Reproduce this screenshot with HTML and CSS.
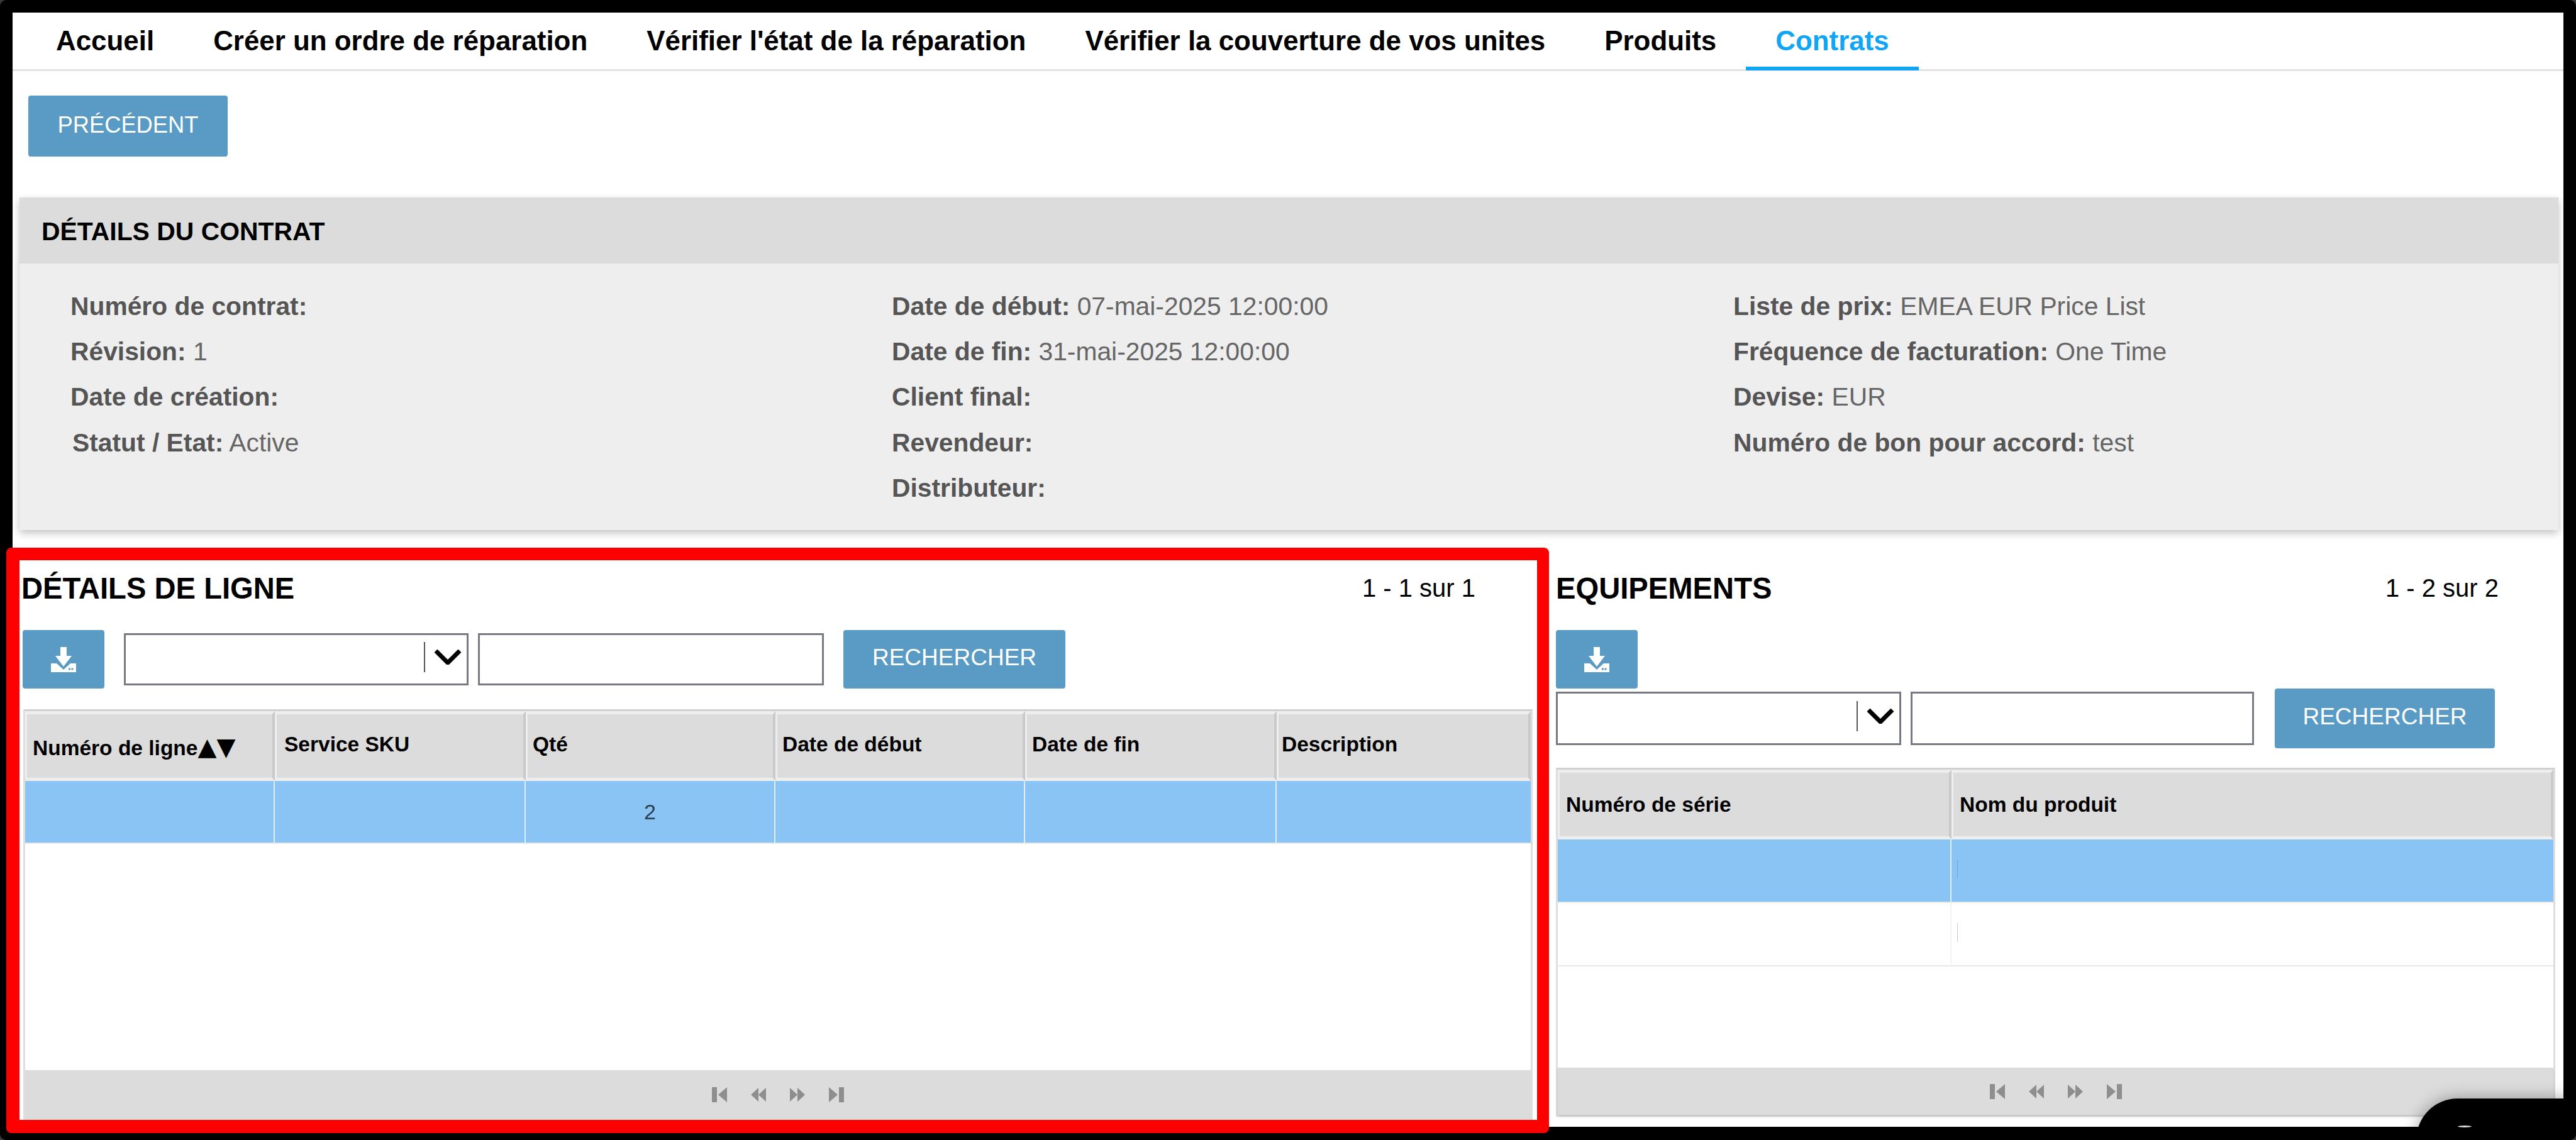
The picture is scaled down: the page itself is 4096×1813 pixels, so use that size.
FILE: index.html
```html
<!DOCTYPE html>
<html lang="fr">
<head>
<meta charset="utf-8">
<title>Contrats</title>
<link rel="stylesheet" href="styles.css">
</head>
<body>
<svg class="defs" width="0" height="0" aria-hidden="true">
  <symbol id="dl" viewBox="0 0 40 40"><path d="M15 0h10v14h8L20 31 7 14h8z"/><path fill-rule="evenodd" d="M0 26h9l11 10 11-10h9v14H0zM28 33.500h3v3h-3zM32.500 33.500h3v3h-3z"/></symbol>
  <symbol id="first" viewBox="0 0 24 24"><path d="M0 0h8v24H0zM24 0v24L10 12z"/></symbol>
  <symbol id="prev" viewBox="0 0 26 24"><path d="M13 0v24L0 12zM26 0v24L13 12z"/></symbol>
  <symbol id="next" viewBox="0 0 26 24"><path d="M0 0v24l13-12zM13 0v24l13-12z"/></symbol>
  <symbol id="last" viewBox="0 0 24 24"><path d="M0 0v24l14-12zM16 0h8v24h-8z"/></symbol>
</svg>
<div class="frame">
  <main class="main">
    <nav class="nav">
      <a class="nav-item">Accueil</a>
      <a class="nav-item">Créer un ordre de réparation</a>
      <a class="nav-item">Vérifier l'état de la réparation</a>
      <a class="nav-item">Vérifier la couverture de vos unites</a>
      <a class="nav-item">Produits</a>
      <a class="nav-item nav-item-active">Contrats</a>
    </nav>
    <button class="btn btn-back">PRÉCÉDENT</button>
    <section class="contract">
      <h2 class="contract-head">DÉTAILS DU CONTRAT</h2>
      <div class="contract-body">
        <div class="contract-col">
          <p class="field"><b>Numéro de contrat:</b></p>
          <p class="field"><b>Révision:</b> 1</p>
          <p class="field"><b>Date de création:</b></p>
          <p class="field field-shift"><b>Statut / Etat:</b> Active</p>
        </div>
        <div class="contract-col">
          <p class="field"><b>Date de début:</b> 07-mai-2025 12:00:00</p>
          <p class="field"><b>Date de fin:</b> 31-mai-2025 12:00:00</p>
          <p class="field"><b>Client final:</b></p>
          <p class="field"><b>Revendeur:</b></p>
          <p class="field"><b>Distributeur:</b></p>
        </div>
        <div class="contract-col">
          <p class="field"><b>Liste de prix:</b> EMEA EUR Price List</p>
          <p class="field"><b>Fréquence de facturation:</b> One Time</p>
          <p class="field"><b>Devise:</b> EUR</p>
          <p class="field"><b>Numéro de bon pour accord:</b> test</p>
        </div>
      </div>
    </section>
    <div class="panels">
      <section class="panel panel-lines">
        <header class="panel-head">
          <h2 class="panel-title">DÉTAILS DE LIGNE</h2>
          <span class="panel-count">1 - 1 sur 1</span>
        </header>
        <div class="toolbar">
          <button class="btn btn-icon"><svg class="icon-dl"><use href="#dl"/></svg></button>
          <div class="select select-lines"><span class="select-sep"></span><svg class="chev" viewBox="0 0 44 24"><path d="M3 2l19 19L41 2"/></svg></div>
          <input class="search search-lines" type="text">
          <button class="btn btn-search">RECHERCHER</button>
        </div>
        <div class="grid grid-lines">
          <table class="table">
            <colgroup><col class="col-a"><col class="col-b"><col class="col-a"><col class="col-a"><col class="col-c"><col></colgroup>
            <thead>
              <tr>
                <th class="th-sort">Numéro de ligne<span class="sort">▲▼</span></th>
                <th class="th-sku">Service SKU</th><th>Qté</th><th>Date de début</th><th>Date de fin</th><th class="th-desc">Description</th>
              </tr>
            </thead>
            <tbody>
              <tr class="row-sel"><td></td><td></td><td class="td-center">2</td><td></td><td></td><td></td></tr>
            </tbody>
          </table>
          <footer class="pager">
            <svg class="pg"><use href="#first"/></svg>
            <svg class="pg"><use href="#prev"/></svg>
            <svg class="pg"><use href="#next"/></svg>
            <svg class="pg"><use href="#last"/></svg>
          </footer>
        </div>
      </section>
      <section class="panel panel-equip">
        <header class="panel-head">
          <h2 class="panel-title">EQUIPEMENTS</h2>
          <span class="panel-count">1 - 2 sur 2</span>
        </header>
        <div class="toolbar">
          <button class="btn btn-icon"><svg class="icon-dl"><use href="#dl"/></svg></button>
        </div>
        <div class="toolbar toolbar-search">
          <div class="select select-equip"><span class="select-sep"></span><svg class="chev" viewBox="0 0 44 24"><path d="M3 2l19 19L41 2"/></svg></div>
          <input class="search search-equip" type="text">
          <button class="btn btn-search btn-search-equip">RECHERCHER</button>
        </div>
        <div class="grid grid-equip">
          <table class="table">
            <colgroup><col class="col-serial"><col></colgroup>
            <thead>
              <tr><th>Numéro de série</th><th>Nom du produit</th></tr>
            </thead>
            <tbody>
              <tr class="row-sel"><td></td><td><span class="caret"></span></td></tr>
              <tr><td></td><td><span class="caret"></span></td></tr>
            </tbody>
          </table>
          <footer class="pager pager-equip">
            <svg class="pg"><use href="#first"/></svg>
            <svg class="pg"><use href="#prev"/></svg>
            <svg class="pg"><use href="#next"/></svg>
            <svg class="pg"><use href="#last"/></svg>
          </footer>
        </div>
      </section>
    </div>
  </main>
  <div class="red-box"></div>
  <div class="notch"></div>
</div>
</body>
</html>
```
FILE: styles.css
```css
* { box-sizing: border-box; }
html, body { margin: 0; height: 100%; background: #3a3a3a; overflow: hidden; }
body { font-family: "Liberation Sans", Arial, sans-serif; color: #000; }
.defs { position: absolute; }

.frame { position: relative; width: 4096px; height: 1813px; background: #000; padding: 20px 20px 21px; border-radius: 10px; overflow: hidden; }
.main { height: 1772px; background: #fff; overflow: hidden; }

.nav { display: flex; height: 93px; padding-left: 22px; border-bottom: 3px solid #e2e2e2; }
.nav-item { height: 92px; padding: 20px 47px 0; font-size: 43.900px; line-height: 50px; font-weight: 700; color: #000; white-space: nowrap; }
.nav-item-active { color: #11a5f5; border-bottom: 6px solid #11a5f5; }

.btn { display: block; border: 0; border-radius: 4px; background: #5a9bc6; color: #fff; font-family: inherit; font-size: 37px; padding: 0; }
.btn-back { width: 317px; height: 97px; margin: 39px 0 0 25px; padding-bottom: 4px; font-size: 36.300px; }

.contract { margin: 65px 8px 0 11px; box-shadow: 0 5px 12px rgba(0, 0, 0, .24); }
.contract-head { height: 105px; margin: 0; padding: 0 0 0 35px; background: #dcdcdc; font-size: 40.900px; line-height: 108px; font-weight: 700; }
.contract-body { display: grid; grid-template-columns: 1306px 1338px 1fr; height: 424px; padding: 32px 0 0 81px; background: #eee; color: #666; }
.field { height: 72.200px; margin: 0; font-size: 40.800px; line-height: 72.200px; white-space: nowrap; }
.field b { color: #555; }
.field-shift { padding-left: 3px; }

.panels { display: flex; }
.panel { padding-top: 57px; }
.panel-lines { width: 2454px; padding-left: 14px; }
.panel-equip { width: 1602px; }
.panel-head { display: flex; justify-content: space-between; align-items: center; height: 70px; }
.panel-title { margin: 0; font-size: 47.200px; font-weight: 700; letter-spacing: 0; }
.panel-lines .panel-count { margin-right: 128px; }
.panel-equip .panel-count { margin-right: 103px; }
.panel-count { font-size: 40px; }

.toolbar { display: flex; align-items: center; margin-top: 32px; }
.panel-lines .toolbar { padding-left: 2px; }
.toolbar-search { margin-top: 0; }
.btn-icon { display: flex; align-items: center; justify-content: center; width: 130px; height: 93px; }
.icon-dl { width: 40px; height: 40px; fill: #fff; }

.select { position: relative; display: flex; align-items: center; justify-content: flex-end; height: 83px; background: #fff; border: 3px solid #777a82; }
.select-lines { width: 548px; margin-left: 31px; }
.select-equip { width: 549px; height: 85px; }
.select-sep { width: 2px; height: 48px; background: #555; margin: -8px 14px 0 0; }
.chev { width: 44px; height: 24px; margin: -8px 8px 0 0; fill: none; stroke: #000; stroke-width: 7px; }
.search { height: 83px; background: #fff; border: 3px solid #777a82; border-radius: 0; padding: 0; outline: 0; }
.search-lines { width: 550px; margin-left: 15px; }
.search-equip { width: 546px; height: 85px; margin-left: 15px; }
.btn-search { width: 353px; height: 93px; margin-left: 31px; padding-bottom: 6px; }
.btn-search-equip { width: 350px; height: 95px; margin-left: 33px; }

.grid { display: flex; flex-direction: column; background: #fff; border: 3px solid #dedede; border-top-color: #d0d0d0; }
.grid-lines { width: 2400px; height: 662px; margin: 33px 0 0 3px; }
.grid-equip { width: 1589px; height: 555px; margin-top: 31px; }
.table { width: 100%; border-collapse: separate; border-spacing: 0; table-layout: fixed; background: #eee; flex: none; }
.col-a { width: 397px; }
.col-b { width: 399px; }
.col-c { width: 400px; }
.col-serial { width: 626px; }
.table th { height: 111px; padding: 0 0 6px 8px; border-top: 5px solid #eee; border-left: 3px solid #eee; border-right: 4px solid #c9c9c9; border-bottom: 5px solid #eee; background: #dcdcdc; background-clip: padding-box; text-align: left; font-size: 33.500px; font-weight: 700; white-space: nowrap; }
.grid-equip .table th { padding-bottom: 0; padding-left: 10px; }
.table .th-sort { padding-top: 10px; padding-left: 9px; }
.table .th-sku { padding-left: 12px; }
.table .th-desc { padding-left: 5px; }
.sort { font-family: "DejaVu Sans", sans-serif; font-size: 39px; line-height: 1; }
.table td { height: 100px; padding: 0; border-right: 2px solid #eef3f7; border-bottom: 2px solid #e8e8e8; background: #fff; font-size: 34px; color: #2d3e50; }
.grid-equip .table td { height: 101px; }
.table td:last-child { border-right: 0; }
.row-sel td { background: #8ac4f5; border-right-color: #e2effb; }
.row-sel .caret { background: #74a6d4; }
.td-center { text-align: center; }
.caret { display: block; width: 1px; height: 30px; margin: -6px 0 0 9px; background: #c2c9d0; }

.pager { display: flex; justify-content: center; align-items: center; gap: 38px; height: 85px; margin-top: auto; background: #dcdcdc; padding-bottom: 7px; }
.pager-equip { height: 75px; padding-bottom: 0; box-shadow: 0 3px 5px rgba(0, 0, 0, .12); }
.pg { width: 24px; height: 24px; fill: #8e8e8e; }

.red-box { position: absolute; left: 10px; top: 871px; width: 2453px; height: 931px; border: solid #f00; border-width: 20px 19px 21px 21px; border-radius: 8px; pointer-events: none; }
.notch { position: absolute; right: 0; bottom: 0; width: 254px; height: 66px; background: #000; border-radius: 66px 0 0 0; box-shadow: 0 0 26px rgba(0, 0, 0, .35); }
.notch::after { content: ""; position: absolute; left: 66px; top: 43px; width: 22px; height: 3px; background: #ddd; border-radius: 50%; }
```
